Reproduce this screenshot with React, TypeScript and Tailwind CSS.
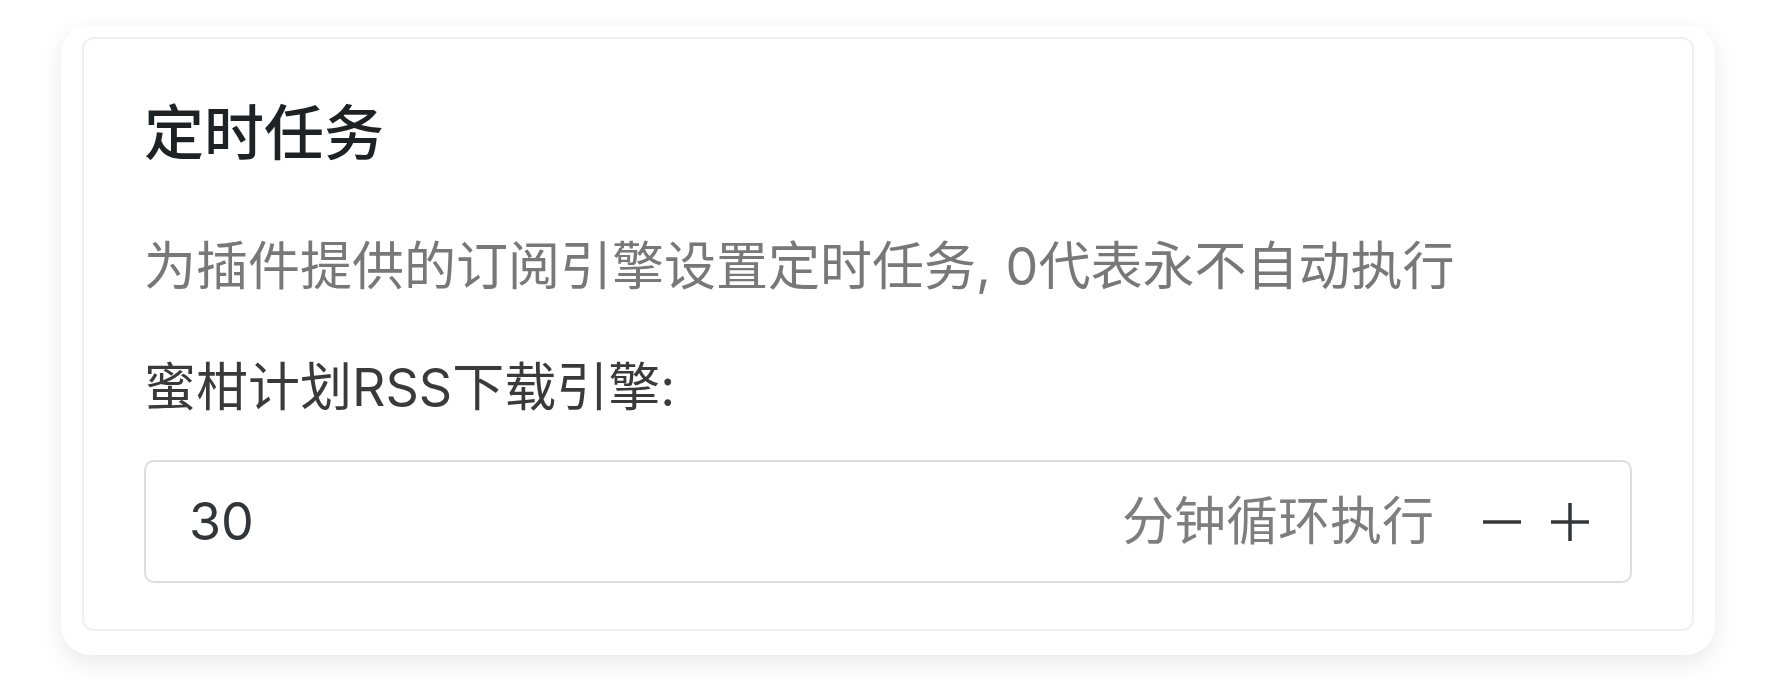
import React from 'react';

const font = { fontFamily: 'Inter, "Noto Sans CJK SC", sans-serif' };

const Stepper: React.FC<{ value: number; suffix: string }> = ({ value, suffix }) => (
    <div className="mt-[36px] flex h-[123px] items-center rounded-[10px] border-2 border-[#dcdce2] bg-white pl-[43px] pr-[40px]">
        <span className="flex-1 text-[52px] text-[#333639]">{value}</span>
        <span className="text-[52px] text-[#7e7e7e]">{suffix}</span>
        <div className="ml-[48px] flex items-center gap-[28px] text-[#333639]">
            <svg width="40" height="40" viewBox="0 0 40 40">
                <path d="M1 20h38" stroke="currentColor" strokeWidth="3.5" />
            </svg>
            <svg width="40" height="40" viewBox="0 0 40 40">
                <path d="M1 20h38M20 1v38" stroke="currentColor" strokeWidth="3.5" />
            </svg>
        </div>
    </div>
);

export default function App() {
    return (
        <div className="min-h-screen bg-white px-[61px] pt-[25px]" style={font}>
            <div className="rounded-[30px] bg-white px-[21px] pb-[24px] pt-[12px] shadow-[0_8px_24px_rgba(0,0,0,0.09)]">
                <div className="rounded-[12px] border-2 border-[#efeff5] px-[60px] pb-[46px] pt-[54px]">
                    <h2 className="text-[60px] font-medium leading-[80px] text-[#1f2225]">定时任务</h2>
                    <p className="mt-[58px] text-[52px] leading-[72px] text-[#787878]">为插件提供的订阅引擎设置定时任务, 0代表永不自动执行</p>
                    <p className="mt-[49px] text-[52px] leading-[72px] text-[#3a3a3a]">蜜柑计划RSS下载引擎:</p>
                    <Stepper value={30} suffix="分钟循环执行" />
                </div>
            </div>
        </div>
    );
}
